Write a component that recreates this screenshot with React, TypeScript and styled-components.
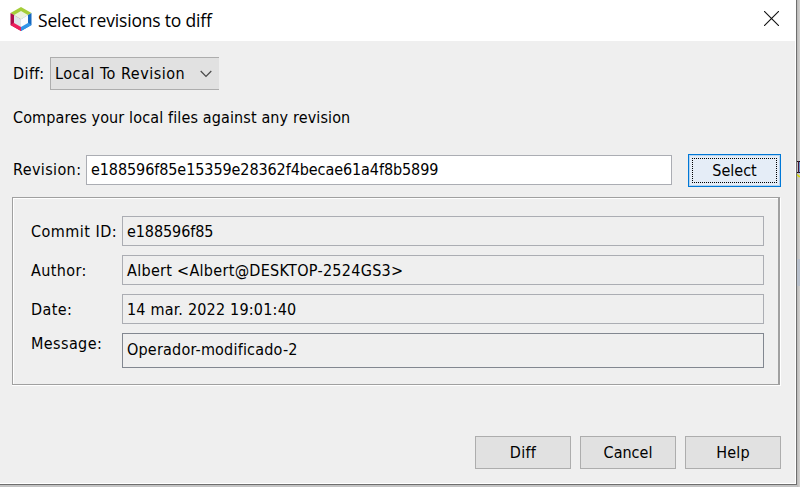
import React from "react";
import styled, { createGlobalStyle } from "styled-components";

const GlobalStyle = createGlobalStyle`
  * { box-sizing: border-box; }
  body { margin: 0; overflow: hidden; background: #cfcfcf; }
`;

const Desktop = styled.div`
  position: relative;
  width: 800px;
  height: 487px;
  overflow: hidden;
  background: #c4c4c4;
`;

const Backdrop = styled.div`
  position: absolute;
  top: 0;
  right: 0;
  width: 3px;
  height: 487px;
  background: linear-gradient(90deg, #b9b8b7, #d3d2d0);
`;

const BackdropSelection = styled.div`
  position: absolute;
  top: 259px;
  right: 0;
  width: 3px;
  height: 27px;
  background: #b7bfcb;
`;

const BackdropCode = styled.svg`
  position: absolute;
  top: 160px;
  right: 0;
`;

const Dialog = styled.div`
  position: relative;
  display: flex;
  flex-direction: column;
  width: 797px;
  height: 485px;
  background: #efefef;
  border-right: 1px solid #6e6e6e;
  border-bottom: 1px solid #6e6e6e;
  box-shadow: inset -1px -1px #fff;
  color: #000;
  font: 16px/20px "DejaVu Sans Condensed", "DejaVu Sans", sans-serif;
  font-stretch: condensed;
`;

const TitleBar = styled.header`
  display: flex;
  align-items: center;
  height: 41px;
  padding: 0 17px 4px 10px;
  background: #fff;
`;

const Title = styled.h1`
  flex: 1;
  margin: 2px 0 0 6px;
  font: 400 17.500px/24px "Open Sans", "Noto Sans", sans-serif;
  letter-spacing: -0.18px;
`;

const Text = styled.span<{ $spacing?: number }>`
  letter-spacing: ${(p) => p.$spacing ?? 0}px;
  white-space: nowrap;
`;

const Body = styled.main`
  display: flex;
  flex-direction: column;
  padding: 16px 15px 0 12px;
`;

const ModeRow = styled.div`
  display: grid;
  grid-template-columns: 37px 169px;
  align-items: center;
  height: 33px;
  padding-left: 1px;
`;

const Combo = styled.div`
  display: flex;
  align-items: center;
  justify-content: space-between;
  height: 33px;
  padding: 0 7px 0 4px;
  background: #e1e1e1;
  border: 1px solid #adadad;
  border-right: 0;
`;

const Description = styled.div`
  display: flex;
  margin-top: 18px;
  height: 20px;
  padding-left: 1px;
`;

const RevisionRow = styled.div`
  display: grid;
  grid-template-columns: 73px 586px 93px;
  align-items: start;
  height: 33px;
  margin-top: 26px;
  padding-left: 1px;

  & > :first-child { margin-top: 6px; }
  & > :nth-child(2) { margin-top: 1px; }
  & > :last-child { margin-left: 16px; }
`;

const Field = styled.div<{ $editable?: boolean; $area?: boolean }>`
  display: flex;
  align-items: center;
  height: ${(p) => (p.$area ? 35 : 30)}px;
  padding: ${(p) => (p.$area ? "0 0 2px 4px" : p.$editable ? "0 0 0 4px" : "2px 0 0 4px")};
  background: ${(p) => (p.$editable ? "#fff" : "#efefef")};
  border: 1px solid ${(p) => (p.$area ? "#828790" : "#abadb3")};
`;

const Button = styled.button<{ $focused?: boolean }>`
  display: flex;
  align-items: center;
  justify-content: center;
  width: ${(p) => (p.$focused ? 93 : 96)}px;
  height: 33px;
  padding: 0;
  color: #000;
  font: inherit;
  font-stretch: condensed;
  background: ${(p) => (p.$focused ? "#e5edf7" : "#e1e1e1")};
  border: 1px solid ${(p) => (p.$focused ? "#0078d7" : "#adadad")};
  box-shadow: ${(p) => (p.$focused ? "inset 0 0 0 1px #b5d3ee" : "none")};
`;

const FocusRing = styled.svg`
  position: absolute;
  top: 3px;
  left: 3px;
`;

const FocusFrame = styled.span`
  position: relative;
  display: flex;
  align-items: center;
  justify-content: center;
  width: 91px;
  height: 31px;
`;

const Details = styled.section`
  display: flex;
  flex-direction: column;
  gap: 9px;
  width: 768px;
  height: 188px;
  margin-top: 10px;
  padding: 18px 14px 0 18px;
  border: 1px solid #a0a0a0;
  border-right-width: 2px;
  box-shadow: inset 1px 1px #fff, 0 1px #fff, 1px 1px #fff;
`;

const DetailRow = styled.div<{ $area?: boolean }>`
  display: grid;
  grid-template-columns: 91px 642px;
  align-items: ${(p) => (p.$area ? "start" : "center")};
`;

const DetailLabel = styled(Text)`
  padding-top: 2px;
`;

const MessageLabel = styled(Text)`
  padding-top: 1px;
`;

const Actions = styled.footer`
  display: flex;
  justify-content: flex-end;
  gap: 9px;
  margin-top: 51px;
`;

const Logo = () => (
  <svg width="22" height="24" viewBox="0 0 22 24">
    <path d="M11 0 21.500 6 11 12 .5 6Z" fill="#a5ce39" />
    <path d="M.5 6 11 12V24L.5 18Z" fill="#ad0d4c" />
    <path d="M.5 18 4 15.500 11 19.500V24Z" fill="#ed1e5c" />
    <path d="M21.500 6 11 12V24l10.500-6Z" fill="#1769bf" />
    <path d="M21.500 18 18 15.500 11 19.500V24Z" fill="#3195e8" />
    <path d="M11 4 18 8 11 12.300 4 8Z" fill="#edf2df" />
    <path d="M4 8 11 12.300V20L4 16Z" fill="#dde5ea" />
    <path d="M18 8 11 12.300V20l7-4Z" fill="#fbfcfe" />
  </svg>
);

const CloseIcon = () => (
  <svg width="15" height="15" viewBox="0 0 15 15">
    <path d="m0 0 15 15M15 0 0 15" stroke="#111" strokeWidth="1.100" />
  </svg>
);

const Chevron = () => (
  <svg width="12" height="8" viewBox="0 0 12 8">
    <path d="m.7 1 5.300 5.400L11.300 1" fill="none" stroke="#484848" strokeWidth="1.200" />
  </svg>
);

const details = [
  { label: "Commit ID:", value: "e188596f85", labelSpacing: 0.48, valueSpacing: -0.08 },
  { label: "Author:", value: "Albert <Albert@DESKTOP-2524GS3>", labelSpacing: 0.4, valueSpacing: 0.3 },
  { label: "Date:", value: "14 mar. 2022 19:01:40", labelSpacing: 0.4, valueSpacing: 0.2 },
  { label: "Message:", value: "Operador-modificado-2", labelSpacing: 0.4, valueSpacing: 0.2, area: true },
];

export default function App() {
  return (
    <>
      <GlobalStyle />
      <Desktop>
        <Backdrop />
        <BackdropSelection />
        <BackdropCode width="3" height="20" viewBox="0 0 3 20">
          <path d="M0 1.500H3M0 12.500H3" stroke="#111" />
          <path d="M1.500 1v12" stroke="#491535" />
          <path d="M2.500 2v10" stroke="#6795cf" />
          <path d="M0 14.500 2 16.500H3" stroke="#d9db00" strokeWidth="1.500" fill="none" />
        </BackdropCode>
        <Dialog>
          <TitleBar>
            <Logo />
            <Title>Select revisions to diff</Title>
            <CloseIcon />
          </TitleBar>
          <Body>
            <ModeRow>
              <Text $spacing={0.4}>Diff:</Text>
              <Combo>
                <Text $spacing={0.52}>Local To Revision</Text>
                <Chevron />
              </Combo>
            </ModeRow>
            <Description>
              <Text $spacing={0.13}>Compares your local files against any revision</Text>
            </Description>
            <RevisionRow>
              <Text $spacing={0.38}>Revision:</Text>
              <Field $editable>
                <Text $spacing={-0.08}>e188596f85e15359e28362f4becae61a4f8b5899</Text>
              </Field>
              <Button $focused>
                <FocusFrame>
                  <FocusRing width="85" height="25" viewBox="0 0 85 25">
                    <path
                      d="M0 .5H85M0 24.500H85M.5 0V25M84.500 0V25"
                      stroke="#000"
                      strokeDasharray="1 1"
                      shapeRendering="crispEdges"
                    />
                  </FocusRing>
                  <Text>Select</Text>
                </FocusFrame>
              </Button>
            </RevisionRow>
            <Details>
              {details.map((d) => {
                const Label = d.area ? MessageLabel : DetailLabel;
                return (
                  <DetailRow key={d.label} $area={d.area}>
                    <Label $spacing={d.labelSpacing}>{d.label}</Label>
                    <Field $area={d.area}>
                      <Text $spacing={d.valueSpacing}>{d.value}</Text>
                    </Field>
                  </DetailRow>
                );
              })}
            </Details>
            <Actions>
              <Button><Text $spacing={0.3}>Diff</Text></Button>
              <Button><Text>Cancel</Text></Button>
              <Button><Text $spacing={0.2}>Help</Text></Button>
            </Actions>
          </Body>
        </Dialog>
      </Desktop>
    </>
  );
}
